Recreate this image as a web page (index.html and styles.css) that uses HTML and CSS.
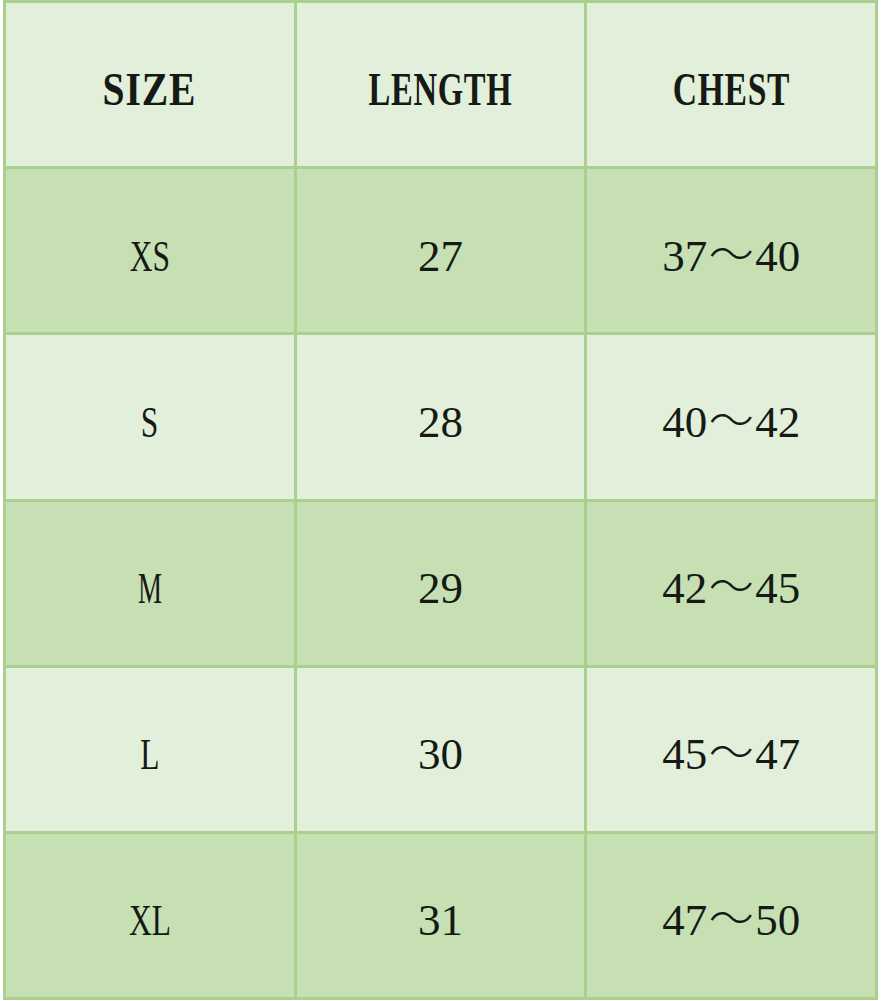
FILE: index.html
```html
<!DOCTYPE html>
<html>
<head>
<meta charset="utf-8">
<link rel="stylesheet" href="styles.css">
</head>
<body>
<div class="chart">
  <div class="cell head"><span class="hd hd-size">SIZE</span></div>
  <div class="cell head"><span class="hd hd-length">LENGTH</span></div>
  <div class="cell head"><span class="hd hd-chest">CHEST</span></div>

  <div class="cell dark"><span class="cond">XS</span></div>
  <div class="cell dark"><span class="num">27</span></div>
  <div class="cell dark"><span class="num">37<span class="tl">～</span>40</span></div>

  <div class="cell light"><span class="cond">S</span></div>
  <div class="cell light"><span class="num">28</span></div>
  <div class="cell light"><span class="num">40<span class="tl">～</span>42</span></div>

  <div class="cell dark"><span class="cond cond-m">M</span></div>
  <div class="cell dark"><span class="num">29</span></div>
  <div class="cell dark"><span class="num">42<span class="tl">～</span>45</span></div>

  <div class="cell light"><span class="cond">L</span></div>
  <div class="cell light"><span class="num">30</span></div>
  <div class="cell light"><span class="num">45<span class="tl">～</span>47</span></div>

  <div class="cell dark"><span class="cond">XL</span></div>
  <div class="cell dark"><span class="num">31</span></div>
  <div class="cell dark"><span class="num">47<span class="tl">～</span>50</span></div>
</div>
</body>
</html>
```

FILE: styles.css
```css
html, body {
  margin: 0;
  padding: 0;
  background: #ffffff;
}

.chart {
  margin-left: 3px;
  width: 875px;
  height: 1000px;
  box-sizing: border-box;
  padding: 3px;
  gap: 3px;
  background: #a9d08e;
  display: grid;
  grid-template-columns: 1fr 1fr 1fr;
  grid-template-rows: repeat(6, 1fr);
}

.cell {
  display: flex;
  align-items: center;
  justify-content: center;
  padding-top: 11px;
  box-sizing: border-box;
  color: #151a14;
  font-family: "Liberation Serif", serif;
  font-size: 45px;
  line-height: 1;
}

.head,
.light {
  background: #e2efda;
}

.dark {
  background: #c6e0b4;
}

.hd {
  display: inline-block;
  font-family: "Liberation Serif", serif;
  font-weight: bold;
  font-size: 46px;
  letter-spacing: 1px;
}

.hd-size {
  transform: scaleX(0.86);
}

.hd-length {
  transform: scaleX(0.71);
}

.hd-chest {
  transform: scaleX(0.73);
}

.cond {
  display: inline-block;
  transform: scaleX(0.7);
}

.cond-m {
  transform: scaleX(0.6);
}

.num {
  display: inline-block;
}

.tl {
  display: inline-block;
  width: 48px;
  text-align: center;
  font-family: "Noto Sans CJK SC", sans-serif;
  font-weight: 300;
  line-height: 0;
  vertical-align: 0;
}
```
